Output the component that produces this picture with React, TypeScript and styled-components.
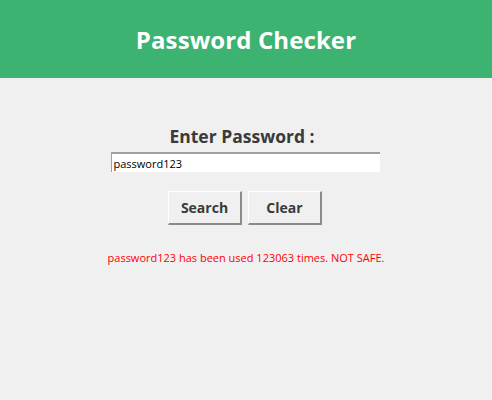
import React, { useState } from "react";
import styled, { createGlobalStyle } from "styled-components";

const Global = createGlobalStyle`
  html, body { margin: 0; padding: 0; background: #f0f0f0; }
  body { font-family: "Open Sans", "Noto Sans", sans-serif; }
`;

const Header = styled.header`
  height: 78px;
  background: #3cb371;
  display: flex;
  align-items: center;
  justify-content: center;
`;

const Title = styled.h1`
  margin: 0;
  color: #fff;
  font-size: 24px;
  font-weight: 700;
  letter-spacing: 0.1px;
`;

const Main = styled.main`
  display: flex;
  flex-direction: column;
  align-items: center;
  padding-top: 44px;
`;

const Label = styled.label`
  font-size: 17.5px;
  font-weight: 700;
  color: #3a3a3a;
  line-height: 28px;
  margin-right: 8px;
`;

const Input = styled.input`
  box-sizing: border-box;
  width: 269px;
  height: 20px;
  margin-top: 2px;
  margin-left: -2px;
  padding: 0 2px;
  border: none;
  border-top: 2px solid #a0a0a0;
  border-left: 1px solid #a0a0a0;
  background: #fff;
  font-family: "Open Sans", sans-serif;
  font-size: 11px;
  color: #000;
  outline: none;
`;

const Buttons = styled.div`
  display: flex;
  gap: 6px;
  margin-top: 19px;
  margin-left: -2px;
`;

const Button = styled.button`
  box-sizing: border-box;
  width: 74px;
  height: 34px;
  background: #f0f0f0;
  border-style: solid;
  border-width: 1px 2px 2px 1px;
  border-color: #ffffff #8a8a8a #8a8a8a #ffffff;
  font-family: "Open Sans", sans-serif;
  font-size: 14px;
  font-weight: 700;
  color: #3a3a3a;
  padding: 0;
  line-height: 30px;
`;

const Message = styled.p`
  margin: 25px 0 0;
  color: #ff0000;
  font-size: 11px;
  line-height: 16px;
`;

export default function App() {
  const [value, setValue] = useState("password123");
  return (
    <>
      <Global />
      <Header>
        <Title>Password Checker</Title>
      </Header>
      <Main>
        <Label htmlFor="pw">Enter Password :</Label>
        <Input id="pw" value={value} onChange={(e) => setValue(e.target.value)} />
        <Buttons>
          <Button>Search</Button>
          <Button onClick={() => setValue("")}>Clear</Button>
        </Buttons>
        <Message>password123 has been used 123063 times. NOT SAFE.</Message>
      </Main>
    </>
  );
}
